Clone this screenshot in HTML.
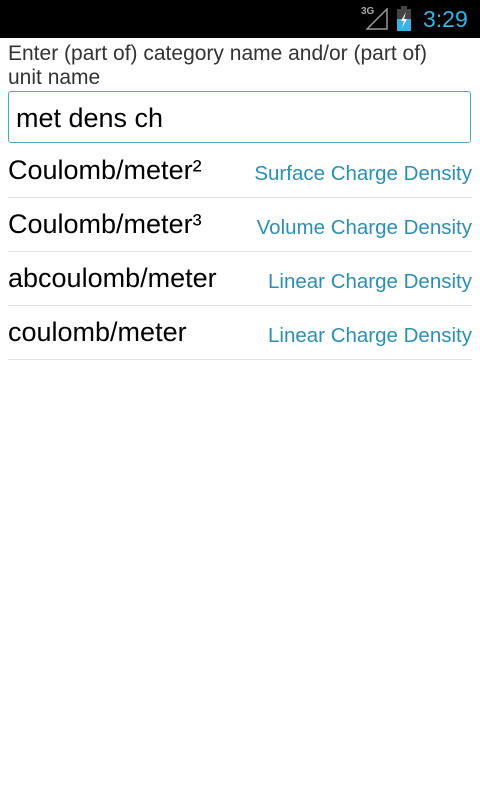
<!DOCTYPE html>
<html><head><style>
body{margin:0;width:480px;height:800px;background:#fff;font-family:"Liberation Sans",sans-serif;position:relative;overflow:hidden}
.sb{position:absolute;left:0;top:0;width:480px;height:38px;background:#000}
.t{position:absolute;white-space:nowrap}
.row{position:absolute;left:8px;width:464px;height:52px;border-bottom:1px solid #e2e2e2}
.u{position:absolute;left:0;top:10px;font-size:27px;color:#000}
.c{position:absolute;right:0;top:17px;font-size:20.5px;color:#2b8fb5}
</style></head><body>
<div class="sb">
<div class="t" style="left:361px;top:6px;font-size:10px;color:#aaa;font-weight:bold">3G</div>
<svg style="position:absolute;left:366px;top:8px" width="22" height="22"><path d="M1 21 L21 1 L21 21 Z" fill="none" stroke="#999" stroke-width="1.5"/></svg>
<div style="position:absolute;left:397px;top:9px;width:14px;height:22px;background:#444"></div>
<div style="position:absolute;left:401px;top:6px;width:6px;height:3px;background:#444"></div>
<div style="position:absolute;left:397px;top:19px;width:14px;height:12px;background:#33b5e5"></div>
<svg style="position:absolute;left:397px;top:9px" width="14" height="22"><path d="M9 3 L4 12 L7 12 L5 19 L10 10 L7 10 Z" fill="#fff"/></svg>
<div class="t" style="left:423px;top:6px;font-size:23px;color:#33b5e5">3:29</div>
</div>
<div class="t" style="left:8px;top:42px;font-size:21px;color:#333;line-height:24px">Enter (part of) category name and/or (part of)<br>unit name</div>
<div style="position:absolute;left:8px;top:91px;width:461px;height:50px;border:1.5px solid #4aa7c0;border-radius:3px"></div>
<div class="t" style="left:16px;top:103px;font-size:27px;color:#000">met dens ch</div>
<div class="row" style="top:145px"><div class="u">Coulomb/meter²</div><div class="c">Surface Charge Density</div></div>
<div class="row" style="top:199px"><div class="u">Coulomb/meter³</div><div class="c">Volume Charge Density</div></div>
<div class="row" style="top:253px"><div class="u">abcoulomb/meter</div><div class="c">Linear Charge Density</div></div>
<div class="row" style="top:307px"><div class="u">coulomb/meter</div><div class="c">Linear Charge Density</div></div>
</body></html>
